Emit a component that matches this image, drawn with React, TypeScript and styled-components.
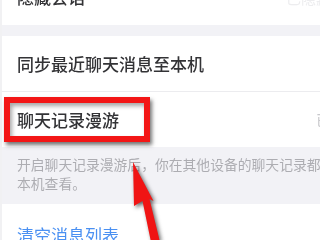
import React from "react";
import styled, { createGlobalStyle } from "styled-components";

const GlobalStyle = createGlobalStyle`
  html, body {
    margin: 0;
    padding: 0;
    background: #ffffff;
  }
  body {
    font-family: "Noto Sans CJK SC", "Noto Sans", sans-serif;
    overflow: hidden;
  }
`;

const Screen = styled.div`
  position: relative;
  width: 320px;
  height: 240px;
  overflow: hidden;
  background: #ffffff;
`;

const Blur = styled.div`
  filter: blur(0.45px);
`;

const List = styled.div`
  width: 375px;
  margin-top: -31px;
  display: flex;
  flex-direction: column;
  border-left: 2px solid #f1f1f3;
`;

const Row = styled.div<{ $h?: number; $divider?: boolean }>`
  height: ${(p) => p.$h ?? 56}px;
  display: flex;
  align-items: center;
  justify-content: space-between;
  padding: 0 16px 0 15px;
  background: #ffffff;
  box-sizing: border-box;
  border-bottom: ${(p) => (p.$divider ? "1px solid #ececef" : "none")};
`;

const Title = styled.span<{ $blue?: boolean }>`
  font-size: 17px;
  line-height: 20px;
  color: ${(p) => (p.$blue ? "#4a90f2" : "#333336")};
  font-weight: ${(p) => (p.$blue ? 400 : 500)};
`;

const Value = styled.span<{ $faint?: boolean }>`
  font-size: 15px;
  color: ${(p) => (p.$faint ? "#ededef" : "#c8c8cc")};
  white-space: nowrap;
`;

const Gap = styled.div`
  height: 11px;
  background: #f2f2f6;
`;

const Note = styled.div`
  background: #f2f2f6;
  padding: 8px 16px 0 15px;
  height: 57px;
  box-sizing: border-box;
  font-size: 13.8px;
  line-height: 19px;
  color: #adadb2;
  white-space: nowrap;
`;

const Highlight = styled.div`
  position: absolute;
  left: 4px;
  top: 97px;
  width: 146px;
  height: 45px;
  box-sizing: border-box;
  border: 6px solid #f31616;
  box-shadow: 2px 3px 4px rgba(0, 0, 0, 0.55),
    inset 2px 3px 4px rgba(0, 0, 0, 0.35);
`;

const Pointer = styled.svg`
  position: absolute;
  left: 0;
  top: 0;
  width: 320px;
  height: 240px;
  filter: drop-shadow(2px 2px 2px rgba(0, 0, 0, 0.6));
`;

export default function App() {
  return (
    <Screen>
      <GlobalStyle />
      <Blur>
        <List>
          <Row>
            <Title>隐藏会话</Title>
            <Value $faint>已隐藏会话</Value>
          </Row>
          <Gap />
          <Row $divider>
            <Title>同步最近聊天消息至本机</Title>
          </Row>
          <Row $h={55}>
            <Title>聊天记录漫游</Title>
            <Value>已开启</Value>
          </Row>
          <Note>
            开启聊天记录漫游后，你在其他设备的聊天记录都可在
            <br />
            本机查看。
          </Note>
          <Row $h={62}>
            <Title $blue>清空消息列表</Title>
          </Row>
        </List>
      </Blur>
      <Highlight />
      <Pointer viewBox="0 0 320 240">
        <polygon
          points="133,162 153.5,201 149.5,199 160,242 151,242 142.5,201 134,206"
          fill="#f01414"
        />
      </Pointer>
    </Screen>
  );
}
